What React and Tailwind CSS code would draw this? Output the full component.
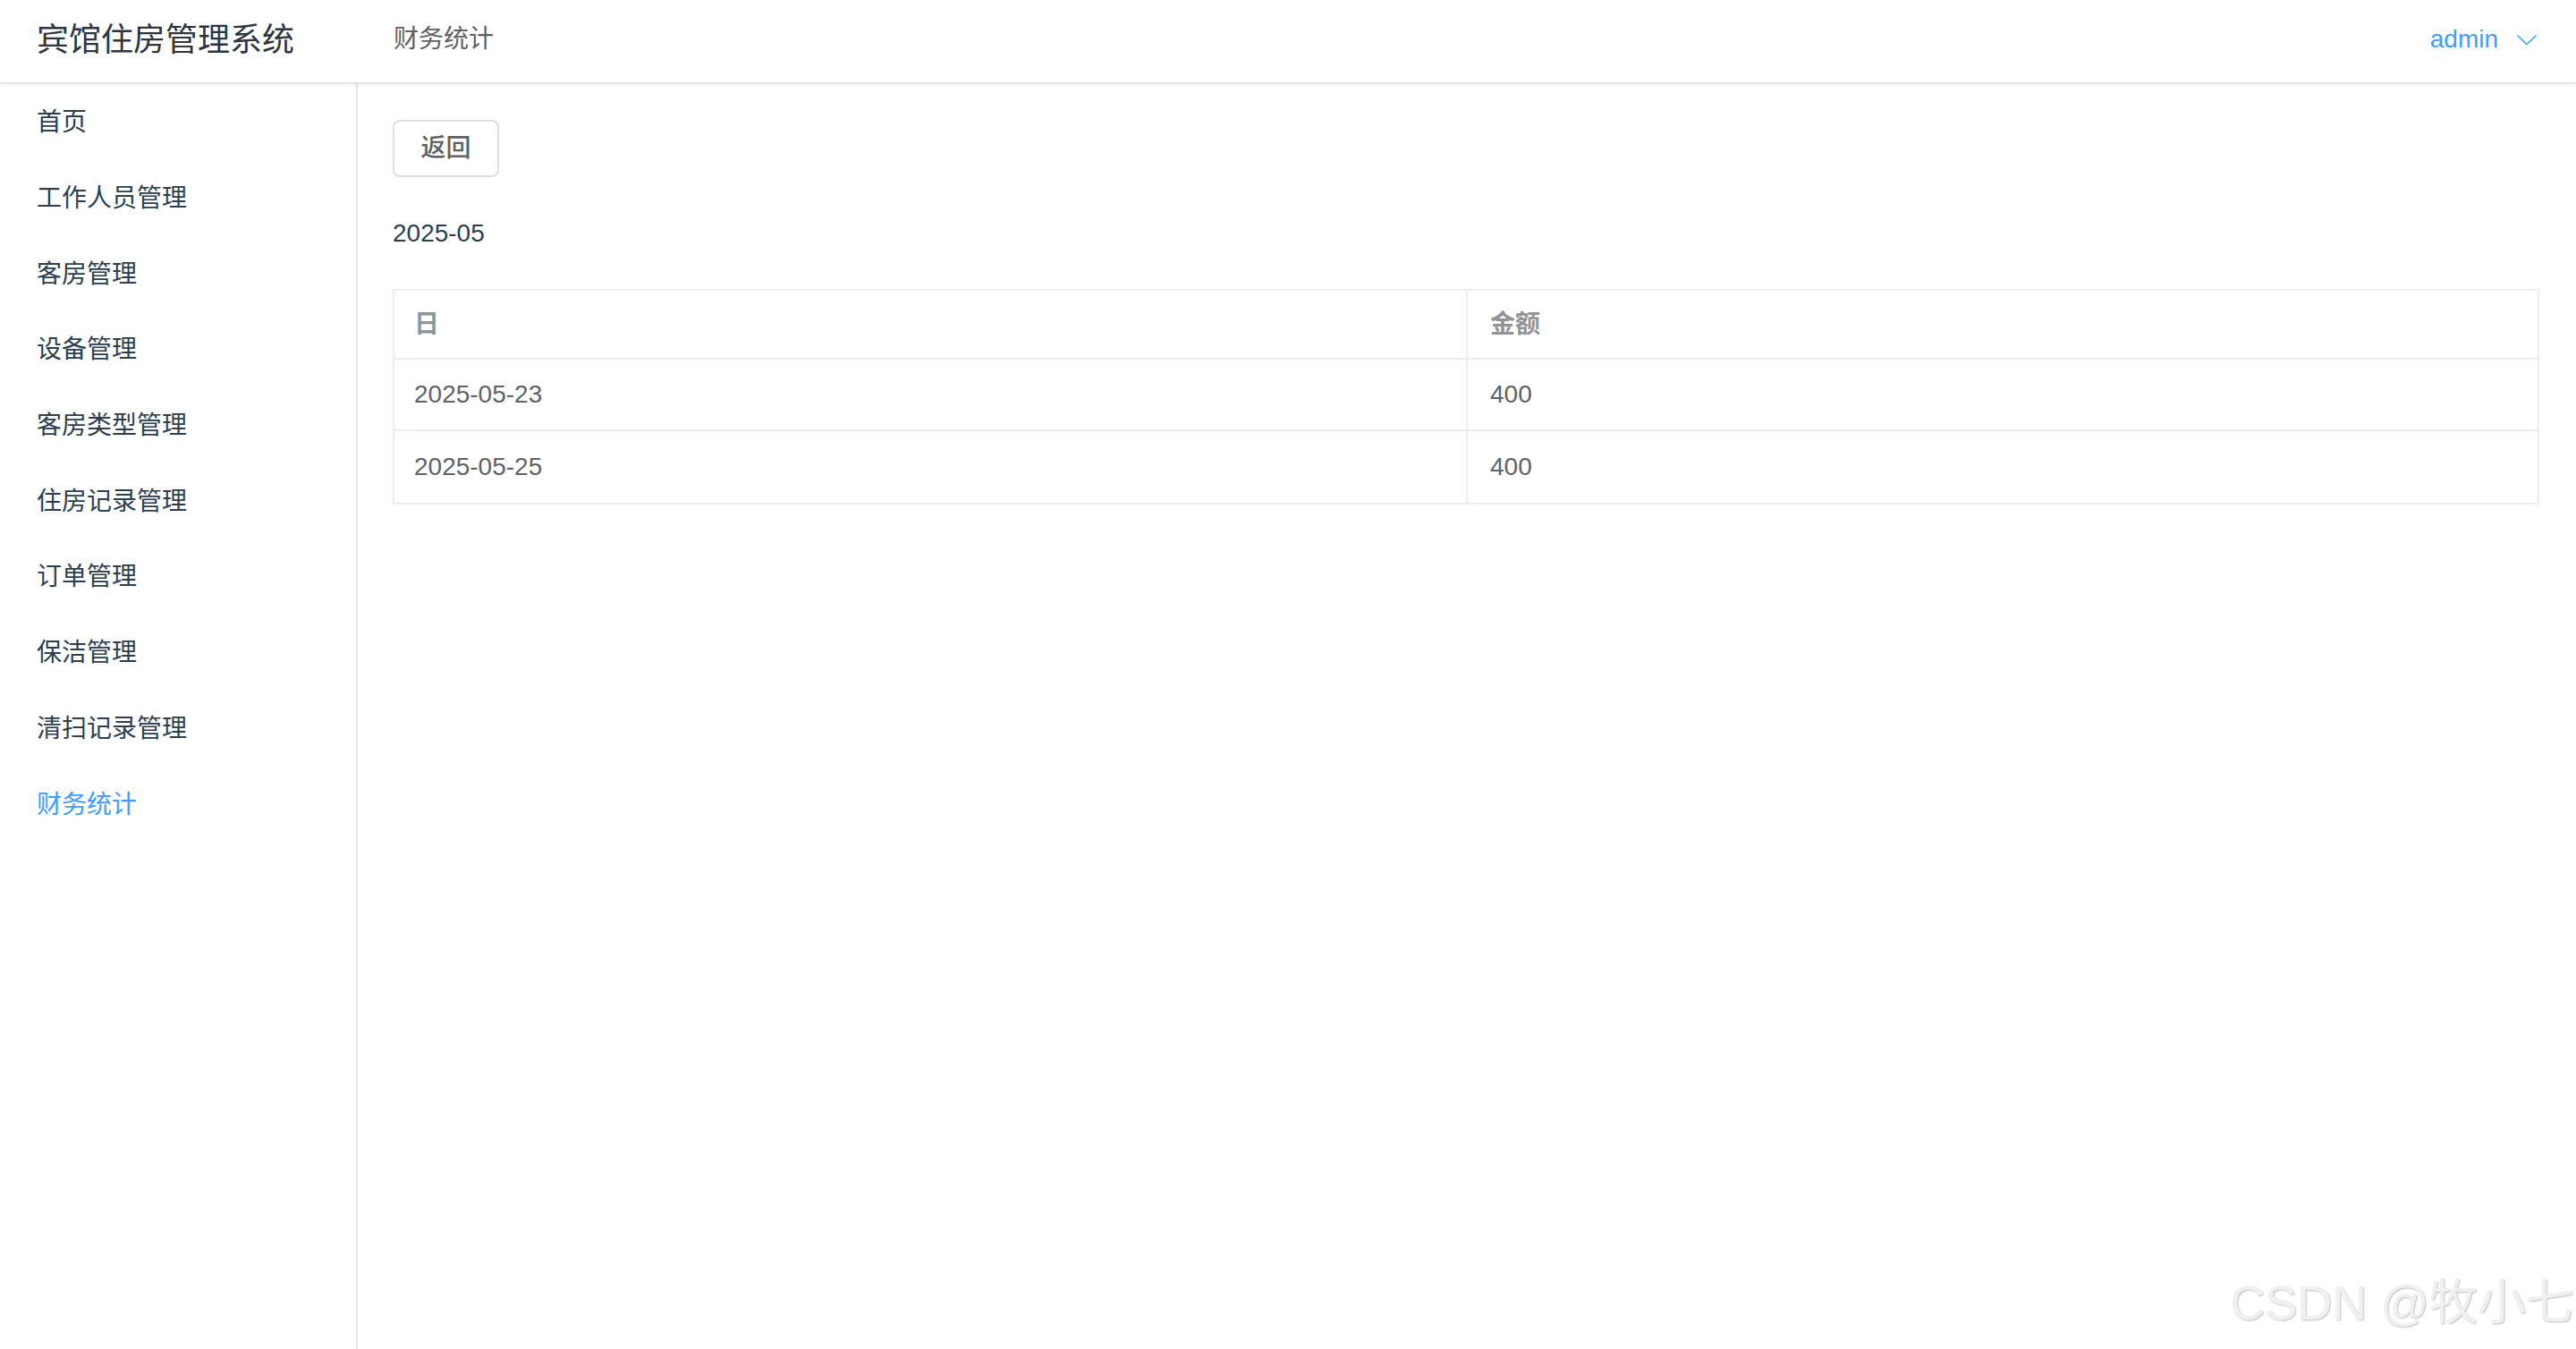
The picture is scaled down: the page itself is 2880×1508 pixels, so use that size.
import { useState } from 'react';

const MENU = [
  '首页',
  '工作人员管理',
  '客房管理',
  '设备管理',
  '客房类型管理',
  '住房记录管理',
  '订单管理',
  '保洁管理',
  '清扫记录管理',
  '财务统计',
];

const ROWS = [
  { day: '2025-05-23', amount: 400 },
  { day: '2025-05-25', amount: 400 },
];

const FONT = "font-['Liberation_Sans','Noto_Sans_CJK_SC',sans-serif]";

function ChevronDown() {
  return (
    <svg width="22" height="12" viewBox="0 0 22 12" fill="none" className="ml-[21px] mt-[2px]">
      <polyline points="1,1 11,10.5 21,1" stroke="#409eff" strokeWidth="1.6" strokeLinejoin="round" strokeLinecap="round" />
    </svg>
  );
}

export default function App() {
  const [active] = useState('财务统计');

  return (
    <div className={`${FONT} relative flex flex-col h-[1508px] w-full bg-white overflow-hidden`}>
      {/* Header */}
      <header className="flex items-center h-[93px] shrink-0 pl-[41px] pr-[44px] border-b border-[#d8dbe0] shadow-[0_2px_4px_rgba(0,0,0,0.08)] z-10 bg-white">
        <div className="w-[399px] text-[36px] leading-none text-[#2f3540] pb-[3px]">宾馆住房管理系统</div>
        <div className="text-[28px] leading-none text-[#5f6166] pb-[4px]">财务统计</div>
        <div className="ml-auto flex items-center text-[28px] leading-none text-[#409eff] pb-[5px]">
          <span>admin</span>
          <ChevronDown />
        </div>
      </header>

      <div className="flex flex-1 min-h-0">
        {/* Sidebar */}
        <aside className="w-[400px] shrink-0 pt-[2px] border-r-2 border-[#e4e6eb]">
          {MENU.map(m => (
            <div
              key={m}
              className={`h-[84.7px] flex items-center pl-[41px] text-[28px] leading-none ${
                m === active ? 'text-[#409eff]' : 'text-[#2c3e50]'
              }`}>
              {m}
            </div>
          ))}
        </aside>

        {/* Content */}
        <main className="flex-1 min-w-0 pt-[41px] pl-[39px] pr-[41px]">
          <button className="w-[119px] h-[64px] rounded-[8px] border-2 border-[#dcdfe6] bg-white text-[28px] leading-none font-medium text-[#606266]">
            返回
          </button>

          <div className="mt-[42px] h-[42px] flex items-center text-[28px] leading-none text-[#2c3e50]">2025-05</div>

          <div className="mt-[41px] border-2 border-[#ebeef5] text-[28px] leading-none">
            <div className="grid grid-cols-2 h-[77px] border-b-2 border-[#ebeef5]">
              <div className="flex items-center pl-[22px] font-bold text-[#909399]">日</div>
              <div className="flex items-center pl-[25px] font-bold text-[#909399] border-l-2 border-[#ebeef5]">金额</div>
            </div>
            {ROWS.map((r, i) => (
              <div
                key={r.day}
                className={`grid grid-cols-2 h-[80px] ${i < ROWS.length - 1 ? 'border-b-2 border-[#ebeef5]' : ''}`}>
                <div className="flex items-center pl-[22px] text-[#606266]">{r.day}</div>
                <div className="flex items-center pl-[25px] text-[#606266] border-l-2 border-[#ebeef5]">{r.amount}</div>
              </div>
            ))}
          </div>
        </main>
      </div>

      {/* watermark */}
      <div className="absolute right-[2px] bottom-[25px] text-[54px] leading-none text-[#f0f0f0] [text-shadow:1px_1px_2px_rgba(0,0,0,0.25)] pointer-events-none">
        CSDN @牧小七
      </div>
    </div>
  );
}
